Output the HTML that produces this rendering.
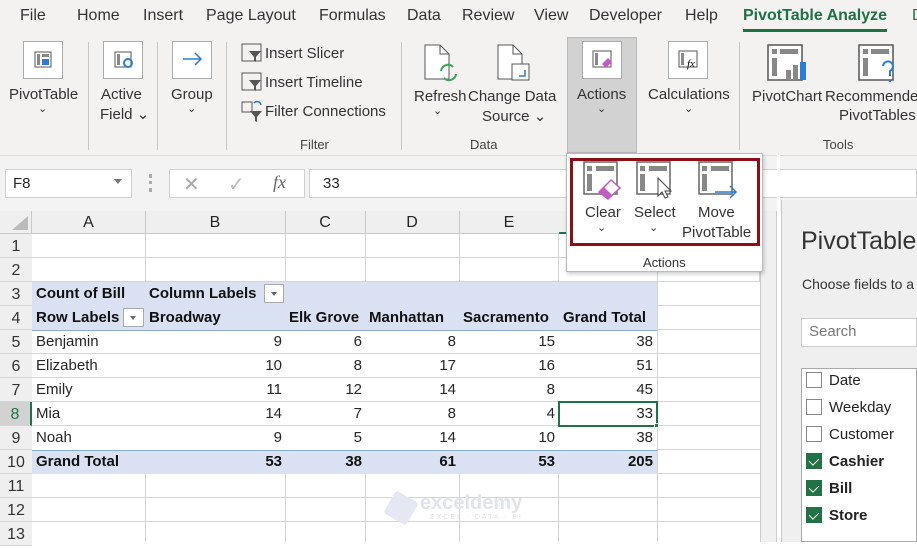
<!DOCTYPE html>
<html><head><meta charset="utf-8"><style>
*{box-sizing:border-box;margin:0;padding:0}
body{width:917px;height:542px;overflow:hidden;background:#fff;font-family:"Liberation Sans",Arial,sans-serif;color:#262626;position:relative}
.a{position:absolute}
.tab{position:absolute;top:7px;font-size:16px;color:#333}
.lbl{position:absolute;font-size:15px;color:#333;text-align:center;white-space:nowrap}
.grp{position:absolute;top:137px;font-size:13px;color:#444}
.sep{position:absolute;top:42px;width:1px;height:108px;background:#c8c6c4}
.ib{position:absolute;background:#fff;border:1px solid #aaa}
.sm{position:absolute;font-size:15px;color:#333}
.cell{position:absolute;font-size:15px;height:24px;line-height:24px;white-space:nowrap}
.r{text-align:right}
.b{font-weight:bold;color:#111}
.hl{position:absolute;left:32px;width:625px;height:1px;background:#d4d4d4}
.vl{position:absolute;top:211px;width:1px;height:331px;background:#d4d4d4}
.rh{position:absolute;left:0;width:32px;height:24px;line-height:26px;text-align:center;font-size:16px;color:#333;background:#efefef;border-bottom:1px solid #d4d4d4}
.cb{position:absolute;left:806px;width:16px;height:16px;border:1px solid #888;background:#fff}
.cb.on{background:#217346;border-color:#217346}
.cb.on:after{content:"";position:absolute;left:4px;top:2px;width:5px;height:8px;border:solid #fff;border-width:0 1.5px 1.5px 0;transform:rotate(45deg)}
.fl{position:absolute;left:829px;font-size:15px;color:#222}
</style></head><body>
<!-- ribbon bg -->
<div class="a" style="left:0;top:0;width:917px;height:155px;background:#f3f2f1"></div>
<div class="a" style="left:0;top:155px;width:917px;height:56px;background:#f3f3f3;border-top:1px solid #ddd"></div>
<div class="tab" style="left:20px">File</div>
<div class="tab" style="left:77px">Home</div>
<div class="tab" style="left:143px">Insert</div>
<div class="tab" style="left:206px">Page Layout</div>
<div class="tab" style="left:319px">Formulas</div>
<div class="tab" style="left:407px">Data</div>
<div class="tab" style="left:462px">Review</div>
<div class="tab" style="left:534px">View</div>
<div class="tab" style="left:589px">Developer</div>
<div class="tab" style="left:685px">Help</div>
<div class="tab" style="left:743px;color:#1e7145;font-weight:bold">PivotTable Analyze</div>
<div class="a" style="left:743px;top:29px;width:144px;height:3px;background:#1e7145"></div>
<div class="tab" style="left:912px;color:#1e7145">D</div>

<!-- Actions highlight -->
<div class="a" style="left:567px;top:37px;width:70px;height:116px;background:#d2d2d2;border:1px solid #bbb"></div>

<!-- PivotTable -->
<div class="ib" style="left:23px;top:41px;width:40px;height:38px"><svg width="38" height="36"><rect x="11" y="10" width="16" height="15" fill="#fff" stroke="#555"/><rect x="13" y="12" width="3" height="11" fill="#888"/><rect x="18" y="12" width="7" height="3" fill="#888"/><rect x="18" y="17" width="7" height="6" fill="#2b7cd3"/></svg></div>
<div class="lbl" style="left:9px;top:86px">PivotTable</div>
<div class="lbl" style="left:38px;top:102px;font-size:11px">⌄</div>
<div class="sep" style="left:88px"></div>
<div class="ib" style="left:103px;top:41px;width:40px;height:38px"><svg width="38" height="36"><rect x="11" y="10" width="16" height="15" fill="#fff" stroke="#555"/><rect x="13" y="12" width="3" height="11" fill="#888"/><circle cx="24" cy="21" r="4" fill="none" stroke="#2b7cd3" stroke-width="2"/></svg></div>
<div class="lbl" style="left:101px;top:86px">Active</div>
<div class="lbl" style="left:100px;top:105px">Field ⌄</div>
<div class="sep" style="left:157px"></div>
<div class="ib" style="left:172px;top:41px;width:40px;height:38px"><svg width="38" height="36"><path d="M10 17H28M22 11L28 17L22 23" fill="none" stroke="#2b7cd3" stroke-width="1.5"/></svg></div>
<div class="lbl" style="left:171px;top:86px">Group</div>
<div class="lbl" style="left:187px;top:102px;font-size:11px">⌄</div>
<div class="sep" style="left:226px"></div>
<svg class="a" style="left:241px;top:43px" width="22" height="80"><g fill="none" stroke="#555"><rect x="1" y="1" width="19" height="17"/><rect x="1" y="30" width="19" height="17"/><rect x="1" y="59" width="10" height="10"/></g><path d="M8 8h12l-5 6v5l-2-1v-4z" fill="#555"/><path d="M8 37h12l-5 6v5l-2-1v-4z" fill="#555"/><path d="M9 68h12l-5 6v5l-2-1v-4z" fill="#555"/><path d="M13 60a4 4 0 0 1 7 2" stroke="#2b7cd3" fill="none" stroke-width="1.5"/></svg>
<div class="sm" style="left:265px;top:45px">Insert Slicer</div>
<div class="sm" style="left:265px;top:74px">Insert Timeline</div>
<div class="sm" style="left:265px;top:103px">Filter Connections</div>
<div class="grp" style="left:300px">Filter</div>
<div class="sep" style="left:401px"></div>
<svg class="a" style="left:424px;top:44px" width="40" height="42"><path d="M1 1H16L25 10V35H1Z" fill="#fff" stroke="#555"/><path d="M16 1V10H25" fill="none" stroke="#555"/><path d="M17 27a7 7 0 0 1 12-4M32 30a7 7 0 0 1-12 4" stroke="#3aa757" stroke-width="2" fill="none"/></svg>
<div class="lbl" style="left:414px;top:88px">Refresh</div>
<div class="lbl" style="left:433px;top:104px;font-size:11px">⌄</div>
<svg class="a" style="left:497px;top:44px" width="40" height="42"><path d="M1 1H16L25 10V35H1Z" fill="#fff" stroke="#555"/><path d="M16 1V10H25" fill="none" stroke="#555"/><rect x="15" y="20" width="17" height="16" fill="#fff" stroke="#555"/><path d="M22 32h6v-6" stroke="#2b7cd3" fill="none" stroke-width="1.5"/></svg>
<div class="lbl" style="left:468px;top:88px">Change Data</div>
<div class="lbl" style="left:482px;top:107px">Source ⌄</div>
<div class="grp" style="left:470px">Data</div>
<div class="ib" style="left:582px;top:41px;width:40px;height:38px"><svg width="38" height="36"><rect x="10" y="9" width="18" height="16" fill="#fff" stroke="#555"/><rect x="12" y="11" width="3" height="12" fill="#888"/><path d="M19 22l6-6 4 4-6 6z" fill="#c35bc3"/></svg></div>
<div class="lbl" style="left:577px;top:86px">Actions</div>
<div class="lbl" style="left:597px;top:102px;font-size:11px">⌄</div>
<div class="ib" style="left:668px;top:41px;width:40px;height:38px"><svg width="38" height="36"><rect x="10" y="9" width="18" height="16" fill="#fff" stroke="#555"/><rect x="12" y="11" width="3" height="12" fill="#888"/><text x="18" y="25" font-size="11" font-style="italic" font-family="Liberation Serif">fx</text></svg></div>
<div class="lbl" style="left:648px;top:86px">Calculations</div>
<div class="lbl" style="left:684px;top:102px;font-size:11px">⌄</div>
<div class="sep" style="left:739px"></div>
<svg class="a" style="left:767px;top:44px" width="40" height="40"><rect x="1" y="1" width="34" height="35" fill="#fff" stroke="#555" stroke-width="1.5"/><rect x="5" y="5" width="5" height="5" fill="#888"/><rect x="13" y="5" width="18" height="5" fill="#888"/><rect x="5" y="14" width="5" height="18" fill="#888"/><rect x="19" y="26" width="5" height="10" fill="#888"/><rect x="26" y="21" width="5" height="15" fill="#888"/><rect x="33" y="18" width="6" height="18" fill="#2b7cd3"/></svg>
<div class="lbl" style="left:752px;top:88px">PivotChart</div>
<svg class="a" style="left:858px;top:44px" width="40" height="42"><rect x="1" y="1" width="34" height="35" fill="#fff" stroke="#555" stroke-width="1.5"/><rect x="5" y="5" width="5" height="5" fill="#888"/><rect x="13" y="5" width="18" height="5" fill="#888"/><rect x="5" y="14" width="5" height="18" fill="#888"/><path d="M25 22a5 5 0 1 1 7 5v5M32 36v2" fill="none" stroke="#2b7cd3" stroke-width="2"/></svg>
<div class="lbl" style="left:825px;top:88px">Recommended</div>
<div class="lbl" style="left:839px;top:107px">PivotTables</div>
<div class="grp" style="left:823px">Tools</div>

<!-- formula bar -->
<div class="a" style="left:5px;top:169px;width:127px;height:29px;background:#fff;border:1px solid #d0d0d0"></div>
<div class="a" style="left:13px;top:175px;font-size:15px">F8</div>
<div class="a" style="left:114px;top:179px;border:4px solid transparent;border-top:5px solid #777"></div>
<div class="a" style="left:149px;top:174px;width:3px;height:18px;border-left:3px dotted #aaa"></div>
<div class="a" style="left:169px;top:169px;width:136px;height:29px;background:#fff;border:1px solid #d0d0d0"></div>
<div class="a" style="left:183px;top:172px;font-size:20px;color:#aaa">✕</div>
<div class="a" style="left:228px;top:172px;font-size:20px;color:#bbb">✓</div>
<div class="a" style="left:273px;top:172px;font-size:18px;color:#666;font-style:italic;font-family:'Liberation Serif'">fx</div>
<div class="a" style="left:309px;top:169px;width:608px;height:29px;background:#fff;border:1px solid #d0d0d0"></div>
<div class="a" style="left:323px;top:175px;font-size:15px">33</div>

<!-- column headers -->
<div class="a" style="left:0;top:211px;width:760px;height:23px;background:#efefef;border-bottom:1px solid #c8c8c8"></div>
<div class="a" style="left:12px;top:216px;width:0;height:0;border-left:16px solid transparent;border-bottom:14px solid #bbb"></div>
<div class="cell" style="left:32px;top:211px;width:113px;text-align:center;font-size:16px">A</div>
<div class="cell" style="left:145px;top:211px;width:140px;text-align:center;font-size:16px">B</div>
<div class="cell" style="left:285px;top:211px;width:80px;text-align:center;font-size:16px">C</div>
<div class="cell" style="left:365px;top:211px;width:94px;text-align:center;font-size:16px">D</div>
<div class="cell" style="left:459px;top:211px;width:100px;text-align:center;font-size:16px">E</div>
<div class="a" style="left:559px;top:232px;width:98px;height:2px;background:#217346"></div>

<!-- blue fills -->
<div class="a" style="left:32px;top:282px;width:625px;height:48px;background:#d9e1f2"></div>
<div class="a" style="left:32px;top:330px;width:625px;height:1px;background:#8ea9db"></div>
<div class="a" style="left:32px;top:450px;width:625px;height:24px;background:#d9e1f2;border-top:1px solid #8ea9db"></div>

<!-- grid lines -->
<div class="hl" style="top:257px"></div><div class="hl" style="top:281px"></div>
<div class="hl" style="top:353px"></div><div class="hl" style="top:377px"></div><div class="hl" style="top:401px"></div><div class="hl" style="top:425px"></div>
<div class="hl" style="top:497px"></div><div class="hl" style="top:521px"></div>
<div class="a" style="left:32px;top:234px;width:728px;height:48px;border-right:1px solid #d4d4d4"></div>
<div class="vl" style="left:145px;top:234px;height:48px"></div><div class="vl" style="left:285px;top:234px;height:48px"></div><div class="vl" style="left:365px;top:234px;height:48px"></div><div class="vl" style="left:459px;top:234px;height:48px"></div><div class="vl" style="left:558px;top:234px;height:48px"></div><div class="vl" style="left:657px;top:234px;height:308px"></div>
<div class="vl" style="left:145px;top:474px;height:68px"></div><div class="vl" style="left:285px;top:474px;height:68px"></div><div class="vl" style="left:365px;top:474px;height:68px"></div><div class="vl" style="left:459px;top:474px;height:68px"></div><div class="vl" style="left:558px;top:474px;height:68px"></div>
<div class="vl" style="left:145px;top:211px;height:23px;background:#c8c8c8"></div><div class="vl" style="left:285px;top:211px;height:23px;background:#c8c8c8"></div><div class="vl" style="left:365px;top:211px;height:23px;background:#c8c8c8"></div><div class="vl" style="left:459px;top:211px;height:23px;background:#c8c8c8"></div>
<div class="hl" style="left:657px;width:103px;top:257px"></div><div class="hl" style="left:657px;width:103px;top:281px"></div><div class="hl" style="left:657px;width:103px;top:305px"></div><div class="hl" style="left:657px;width:103px;top:329px"></div><div class="hl" style="left:657px;width:103px;top:353px"></div><div class="hl" style="left:657px;width:103px;top:377px"></div><div class="hl" style="left:657px;width:103px;top:401px"></div><div class="hl" style="left:657px;width:103px;top:425px"></div><div class="hl" style="left:657px;width:103px;top:449px"></div><div class="hl" style="left:657px;width:103px;top:473px"></div><div class="hl" style="left:657px;width:103px;top:497px"></div><div class="hl" style="left:657px;width:103px;top:521px"></div>

<!-- row headers -->
<div class="a" style="left:31px;top:211px;width:1px;height:331px;background:#c8c8c8"></div>
<div class="rh" style="top:234px">1</div><div class="rh" style="top:258px">2</div><div class="rh" style="top:282px">3</div><div class="rh" style="top:306px">4</div><div class="rh" style="top:330px">5</div><div class="rh" style="top:354px">6</div><div class="rh" style="top:378px">7</div><div class="rh" style="top:402px;background:#d2d2d2;color:#217346;border-right:2px solid #217346">8</div><div class="rh" style="top:426px">9</div><div class="rh" style="top:450px">10</div><div class="rh" style="top:474px">11</div><div class="rh" style="top:498px">12</div><div class="rh" style="top:522px">13</div>

<!-- data -->
<div class="cell b" style="left:36px;top:282px">Count of Bill</div>
<div class="cell b" style="left:149px;top:282px">Column Labels</div>
<div class="a" style="left:264px;top:284px;width:20px;height:19px;background:#fff;border:1px solid #aaa"><div class="a" style="left:6px;top:7px;border:3px solid transparent;border-top:4px solid #666"></div></div>
<div class="cell b" style="left:36px;top:306px">Row Labels</div>
<div class="a" style="left:123px;top:308px;width:21px;height:19px;background:#fff;border:1px solid #aaa"><div class="a" style="left:6px;top:7px;border:3px solid transparent;border-top:4px solid #666"></div></div>
<div class="cell b" style="left:149px;top:306px">Broadway</div>
<div class="cell b" style="left:289px;top:306px">Elk Grove</div>
<div class="cell b" style="left:369px;top:306px">Manhattan</div>
<div class="cell b" style="left:463px;top:306px">Sacramento</div>
<div class="cell b" style="left:563px;top:306px">Grand Total</div>

<div class="cell" style="left:36px;top:330px">Benjamin</div>
<div class="cell" style="left:36px;top:354px">Elizabeth</div>
<div class="cell" style="left:36px;top:378px">Emily</div>
<div class="cell" style="left:36px;top:402px">Mia</div>
<div class="cell" style="left:36px;top:426px">Noah</div>
<div class="cell b" style="left:36px;top:450px">Grand Total</div>

<div class="a" style="left:145px;top:330px;width:140px">
<div class="cell r" style="top:0;width:137px">9</div><div class="cell r" style="top:24px;width:137px">10</div><div class="cell r" style="top:48px;width:137px">11</div><div class="cell r" style="top:72px;width:137px">14</div><div class="cell r" style="top:96px;width:137px">9</div><div class="cell r b" style="top:120px;width:137px">53</div></div>
<div class="a" style="left:285px;top:330px">
<div class="cell r" style="top:0;width:77px">6</div><div class="cell r" style="top:24px;width:77px">8</div><div class="cell r" style="top:48px;width:77px">12</div><div class="cell r" style="top:72px;width:77px">7</div><div class="cell r" style="top:96px;width:77px">5</div><div class="cell r b" style="top:120px;width:77px">38</div></div>
<div class="a" style="left:365px;top:330px">
<div class="cell r" style="top:0;width:91px">8</div><div class="cell r" style="top:24px;width:91px">17</div><div class="cell r" style="top:48px;width:91px">14</div><div class="cell r" style="top:72px;width:91px">8</div><div class="cell r" style="top:96px;width:91px">14</div><div class="cell r b" style="top:120px;width:91px">61</div></div>
<div class="a" style="left:459px;top:330px">
<div class="cell r" style="top:0;width:96px">15</div><div class="cell r" style="top:24px;width:96px">16</div><div class="cell r" style="top:48px;width:96px">8</div><div class="cell r" style="top:72px;width:96px">4</div><div class="cell r" style="top:96px;width:96px">10</div><div class="cell r b" style="top:120px;width:96px">53</div></div>
<div class="a" style="left:558px;top:330px">
<div class="cell r" style="top:0;width:95px">38</div><div class="cell r" style="top:24px;width:95px">51</div><div class="cell r" style="top:48px;width:95px">45</div><div class="cell r" style="top:72px;width:95px">33</div><div class="cell r" style="top:96px;width:95px">38</div><div class="cell r b" style="top:120px;width:95px">205</div></div>
<div class="a" style="left:558px;top:401px;width:100px;height:26px;border:2px solid #217346"></div>
<div class="a" style="left:654px;top:423px;width:5px;height:5px;background:#217346;border:1px solid #fff"></div>

<!-- watermark -->
<div class="a" style="left:388px;top:495px;width:26px;height:26px;background:#e3e8f3;transform:rotate(30deg);border-radius:3px"></div>
<div class="a" style="left:420px;top:492px;font-size:20px;font-weight:bold;color:#dfe4ef">exceldemy</div>
<div class="a" style="left:430px;top:514px;font-size:7px;color:#dde2ec;letter-spacing:2px">EXCEL · DATA · BI</div>

<!-- scrollbar & pane -->
<div class="a" style="left:760px;top:211px;width:17px;height:331px;background:#f0f0f0;border-left:1px solid #ccc;border-right:1px solid #ccc"></div>
<div class="a" style="left:777px;top:155px;width:3px;height:387px;background:#fff"></div>
<div class="a" style="left:781px;top:200px;width:136px;height:342px;background:#efefef;border-left:1px solid #c8c8c8"></div>
<div class="a" style="left:801px;top:227px;font-size:25px;color:#333">PivotTable</div>
<div class="a" style="left:802px;top:276px;font-size:14px;color:#333">Choose fields to a</div>
<div class="a" style="left:801px;top:318px;width:116px;height:29px;background:#fff;border:1px solid #ccc"></div>
<div class="a" style="left:809px;top:323px;font-size:15px;color:#777">Search</div>
<div class="a" style="left:801px;top:368px;width:116px;height:174px;background:#fff;border:1px solid #aaa"></div>
<div class="cb" style="top:372px"></div><div class="fl" style="top:372px">Date</div>
<div class="cb" style="top:399px"></div><div class="fl" style="top:399px">Weekday</div>
<div class="cb" style="top:426px"></div><div class="fl" style="top:426px">Customer</div>
<div class="cb on" style="top:453px"></div><div class="fl b" style="top:453px">Cashier</div>
<div class="cb on" style="top:480px"></div><div class="fl b" style="top:480px">Bill</div>
<div class="cb on" style="top:507px"></div><div class="fl b" style="top:507px">Store</div>

<!-- dropdown -->
<div class="a" style="left:566px;top:153px;width:197px;height:119px;background:#fff;border:1px solid #bbb;box-shadow:1px 2px 4px rgba(0,0,0,.2)"></div>
<div class="a" style="left:570px;top:158px;width:190px;height:88px;border:3px solid #8b0f14"></div>
<svg class="a" style="left:583px;top:161px" width="42" height="40"><rect x="1" y="1" width="33" height="32" fill="#fff" stroke="#666" stroke-width="1.5"/><rect x="4" y="5" width="5" height="5" fill="#888"/><rect x="13" y="5" width="18" height="5" fill="#888"/><rect x="4" y="13" width="5" height="17" fill="#888"/><path d="M16 31l12-12 9 8-12 11z" fill="#fff" stroke="#c35bc3" stroke-width="1.5"/><path d="M16 31l5-5 8 8-4 4z" fill="#c35bc3"/></svg>
<svg class="a" style="left:636px;top:161px" width="42" height="40"><rect x="1" y="1" width="33" height="32" fill="#fff" stroke="#666" stroke-width="1.5"/><rect x="4" y="5" width="5" height="5" fill="#888"/><rect x="13" y="5" width="18" height="5" fill="#888"/><rect x="4" y="13" width="5" height="17" fill="#888"/><path d="M22 17v18l4-4 3 6 3-1-3-6h6z" fill="#fff" stroke="#444"/></svg>
<svg class="a" style="left:698px;top:161px" width="42" height="40"><rect x="1" y="1" width="33" height="32" fill="#fff" stroke="#666" stroke-width="1.5"/><rect x="4" y="5" width="5" height="5" fill="#888"/><rect x="13" y="5" width="18" height="5" fill="#888"/><rect x="4" y="13" width="5" height="17" fill="#888"/><path d="M17 31h21M32 25l6 6-6 6" fill="none" stroke="#2b7cd3" stroke-width="1.5"/></svg>
<div class="lbl" style="left:585px;top:204px">Clear</div>
<div class="lbl" style="left:597px;top:221px;font-size:11px">⌄</div>
<div class="lbl" style="left:634px;top:204px">Select</div>
<div class="lbl" style="left:649px;top:221px;font-size:11px">⌄</div>
<div class="lbl" style="left:698px;top:204px">Move</div>
<div class="lbl" style="left:682px;top:224px">PivotTable</div>
<div class="lbl" style="left:643px;top:255px;font-size:13px">Actions</div>
</body></html>
